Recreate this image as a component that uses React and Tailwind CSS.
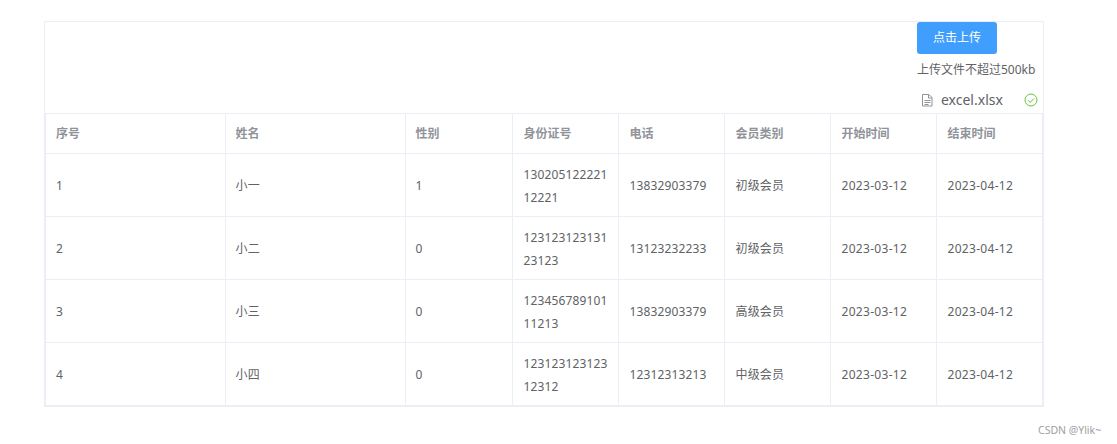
const font = { fontFamily: '"Noto Sans", "Noto Sans CJK SC", sans-serif' };

const rows = [
  ["1", "小一", "1", "130205122221", "12221", "13832903379", "初级会员"],
  ["2", "小二", "0", "123123123131", "23123", "13123232233", "初级会员"],
  ["3", "小三", "0", "123456789101", "11213", "13832903379", "高级会员"],
  ["4", "小四", "0", "123123123123", "12312", "12312313213", "中级会员"],
];
const heads = ["序号", "姓名", "性别", "身份证号", "电话", "会员类别", "开始时间", "结束时间"];
const widths = ["w-[179px]", "w-[180px]", "w-[107px]", "w-[106px]", "w-[106px]", "w-[106px]", "w-[106px]", "w-[106px]"];

function Cell({ children, last, bottom, date, wide }) {
  return (
    <td className={`${wide ? "pl-[11px] pr-[9px]" : "px-[10px]"} pt-[2px] text-[12px] ${date ? "tracking-[0.3px]" : "tracking-[0.14px]"} leading-[23px] text-[#606266] border-[#ebeef5] ${bottom ? "" : "border-b"} ${last ? "" : "border-r"}`}>
      {children}
    </td>
  );
}

export default function App() {
  return (
    <div className="relative h-[444px] w-[1117px] bg-white pl-[44px] pt-[21px]" style={font}>
      <div className="w-[1000px] border-t border-l border-r border-[#ebeef5] flex flex-col">
        <div className="h-[91px] flex flex-col items-start pl-[872px] shrink-0">
          <button className="w-[80px] h-[32px] rounded-[3px] bg-[#409eff] text-white text-[12px] flex items-center justify-center">点击上传</button>
          <div className="mt-[7px] h-[17px] text-[12px] leading-[17px] text-[#606266] whitespace-nowrap">上传文件不超过500kb</div>
          <div className="mt-[13px] h-[18px] flex items-center w-[121px] pl-[4px] text-[14px] text-[#606266]">
            <svg width="13" height="14" viewBox="0 0 13 14" fill="none" stroke="#909399" strokeWidth="1" className="shrink-0">
              <path d="M1.5 1.5h6.5l3 3v8.500h-9.500z" />
              <path d="M7.500 1.500v3.500h3.500M3.500 7.500h6M3.500 9.500h6M3.500 11.500h4" />
            </svg>
            <span className="ml-[7px] leading-[18px]">excel.xlsx</span>
            <svg width="14" height="14" viewBox="0 0 14 14" fill="none" className="ml-auto shrink-0">
              <circle cx="7" cy="7" r="6" stroke="#67c23a" />
              <path d="M4 7.200l2.200 2.200 3.800-4" stroke="#67c23a" />
            </svg>
          </div>
        </div>
        <div className="border-l-2 border-r-2 border-b-2 border-t border-[#ebeef5] w-[1000px] -mx-px">
          <table className="table-fixed border-collapse w-[996px]">
            <colgroup>
              {widths.map((w, i) => <col key={i} className={w} />)}
            </colgroup>
            <thead>
              <tr className="h-[39px]">
                {heads.map((h, i) => (
                  <th key={h} className={`${i > 2 ? "pl-[11px] pr-[9px]" : "px-[10px]"} pt-[2px] text-left text-[12px] font-bold text-[#909399] border-b border-[#ebeef5] ${i < 7 ? "border-r" : ""}`}>{h}</th>
                ))}
              </tr>
            </thead>
            <tbody>
              {rows.map((r, i) => {
                const b = i === rows.length - 1;
                return (
                  <tr key={r[0]} className="h-[63px]">
                    <Cell bottom={b}>{r[0]}</Cell>
                    <Cell bottom={b}>{r[1]}</Cell>
                    <Cell bottom={b}>{r[2]}</Cell>
                    <Cell bottom={b} wide><div>{r[3]}</div><div>{r[4]}</div></Cell>
                    <Cell bottom={b} wide>{r[5]}</Cell>
                    <Cell bottom={b} wide>{r[6]}</Cell>
                    <Cell bottom={b} wide date>2023-03-12</Cell>
                    <Cell bottom={b} wide date last>2023-04-12</Cell>
                  </tr>
                );
              })}
            </tbody>
          </table>
        </div>
      </div>
      <div className="absolute left-[1038px] top-[423px] text-[10.5px] leading-[14px] text-[#a0a0a0] whitespace-nowrap">CSDN @Ylik~</div>
    </div>
  );
}
